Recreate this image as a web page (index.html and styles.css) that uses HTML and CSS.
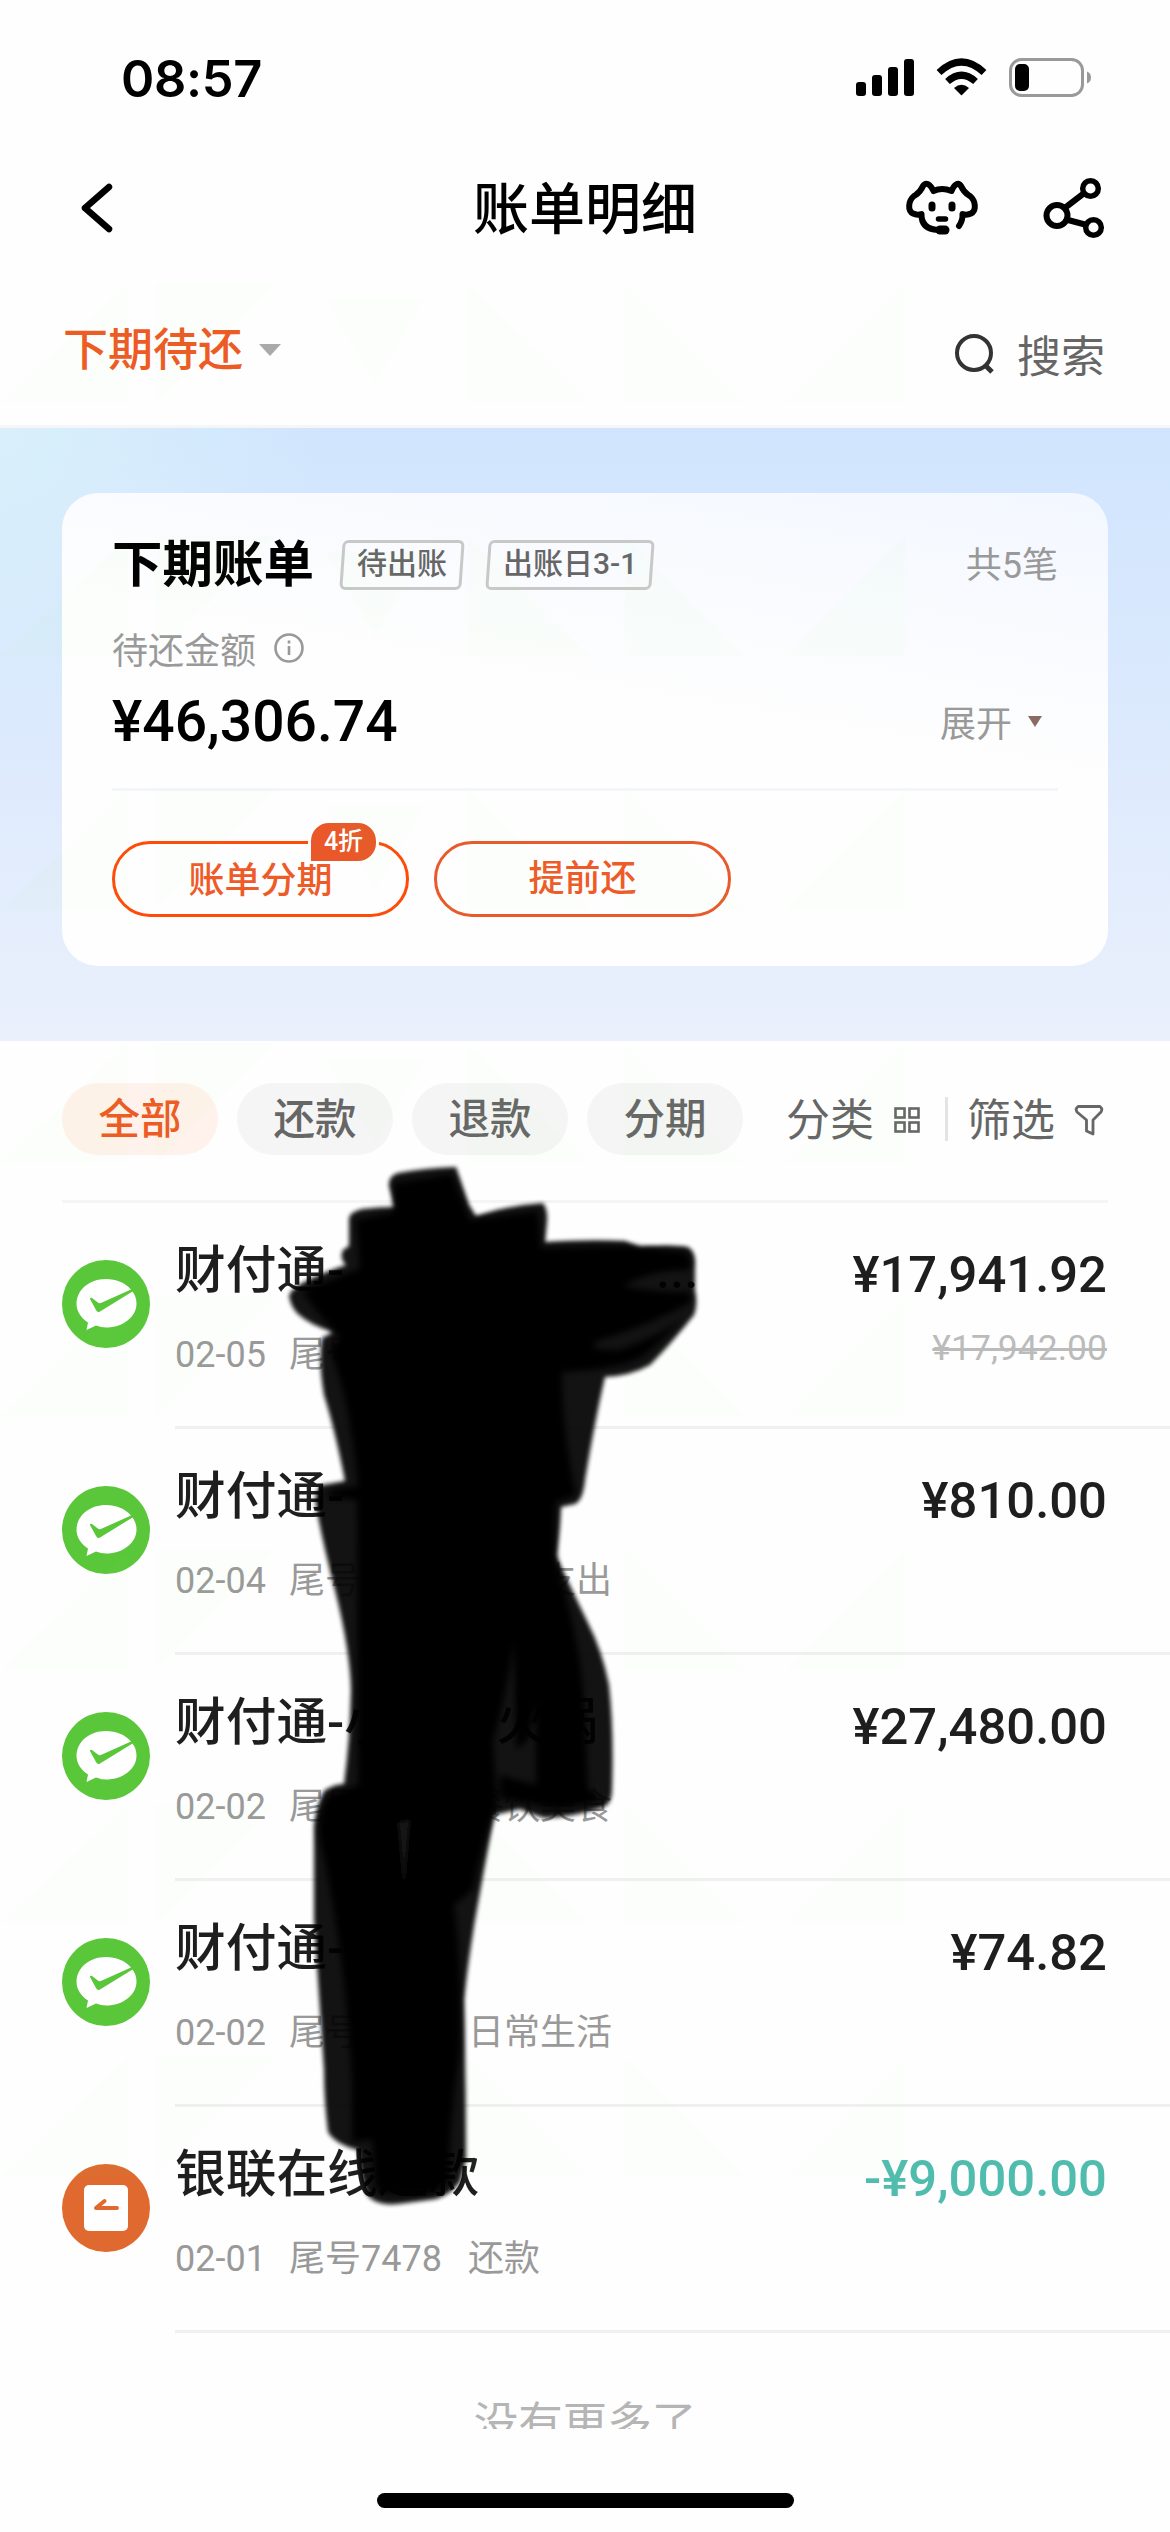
FILE: index.html
```html
<!DOCTYPE html>
<html lang="zh-CN">
<head>
<meta charset="utf-8">
<title>账单明细</title>
<link rel="stylesheet" href="styles.css">
</head>
<body>
<svg class="defs" width="0" height="0">
  <symbol id="pay" viewBox="0 0 88 88">
    <circle cx="44" cy="44" r="44" fill="#5ac63a"/>
    <path d="M44 19C27 19 14.500 30 14.500 44C14.500 51 19 58 26 62.500L24.500 70L34 65.500Q39 67.500 44 67.500C61 67.500 74.500 57 74.500 43.500C74.500 38 72.500 34.500 70.500 31.500L38 51.500Q35.500 53 34 50L28 39Q28 37 30 38L36.500 43Q38 43.500 40 42.500L69 29.500C63 22.500 54 19 44 19Z" fill="#fff"/>
  </symbol>
</svg>
<div class="page">
  <header class="status">
    <span class="time">08:57</span>
    <svg width="236" height="40" viewBox="856 58 236 40">
      <rect x="856" y="82" width="10" height="14" rx="3"/><rect x="872" y="75" width="10" height="21" rx="3"/><rect x="888" y="67" width="10" height="29" rx="3"/><rect x="904" y="59" width="10" height="37" rx="3"/>
      <path d="M961.500 95.500L954 88Q961.500 81.500 969 88Z"/>
      <path d="M947.500 81.500Q961.500 69 975.500 81.500M939 72.500Q961.500 51.500 984 72.500" fill="none" stroke="#000" stroke-width="7"/>
      <rect x="1010.500" y="59.500" width="72" height="36" rx="11" fill="none" stroke="#999" stroke-width="3"/>
      <rect x="1015" y="64" width="14" height="27" rx="5"/><path d="M1087 71.500Q1091 73 1091 77.500T1087 83.500Z" fill="#999"/>
    </svg>
  </header>
  <nav class="nav">
    <svg width="34" height="52" viewBox="80 181 34 52"><path d="M109 186L85 207L109 228" fill="none" stroke="#000" stroke-width="6.500" stroke-linecap="round" stroke-linejoin="round"/></svg>
    <h1>账单明细</h1>
    <svg width="200" height="62" viewBox="905 176 200 62" fill="none" stroke="#000" stroke-width="6" stroke-linecap="round" stroke-linejoin="round">
      <path d="M933.500 190Q942 186 951.500 190C954 184 958 180.500 961 185C964 192 967 193 970 195C976 200 976.500 210 971 212.500Q967 214.500 962.500 213C963 219 961 222 959 225M933.500 190C930 183 926 180.500 923 185C920 192 917 193 914 195C908 200 907.500 210 913 212.500Q917 214.500 921.500 213Q921 228 938 229"/>
      <path d="M932 204V207M952 204V207" stroke-width="7"/><path d="M938.500 218H945.500" stroke-width="5.500"/><path d="M940 229H945" stroke-width="9"/>
      <circle cx="1057" cy="214.500" r="10.500"/><circle cx="1090.500" cy="187.500" r="7.800" stroke-width="5.500"/><circle cx="1093.500" cy="226.500" r="7.800" stroke-width="5.500"/>
      <path d="M1066 206L1083 193M1068 219L1085 223.500"/>
    </svg>
  </nav>
  <div class="period">
    <div class="picker"><span>下期待还</span><i class="tri"></i></div>
    <div class="search"><svg width="42" height="42" viewBox="0 0 42 42" fill="none" stroke="#333" stroke-width="4"><circle cx="20" cy="20" r="17"/><path d="M32 33L38 39" stroke-width="5"/></svg>搜索</div>
  </div>
  <section class="hero">
    <div class="card">
      <div class="line head"><h2>下期账单</h2><span class="tag">待出账</span><span class="tag">出账日3-1</span><span class="count">共5笔</span></div>
      <div class="line owed">待还金额<svg width="32" height="32" viewBox="0 0 32 32" fill="none" stroke="#999" stroke-width="2.600"><circle cx="16" cy="16" r="13.500"/><path d="M16 14V23M16 8.500V11.500"/></svg></div>
      <div class="line total"><strong>¥46,306.74</strong><span class="expand">展开<i class="tri"></i></span></div>
      <div class="actions">
        <div class="btn first">账单分期<b class="badge">4折</b></div>
        <div class="btn second">提前还</div>
      </div>
    </div>
  </section>
  <div class="filters">
    <span class="pill on">全部</span><span class="pill">还款</span><span class="pill">退款</span><span class="pill">分期</span>
    <span class="opt">分类</span>
    <svg class="grid" width="28" height="28" viewBox="0 0 28 28" fill="none" stroke="#666" stroke-width="2.600"><rect x="2.500" y="2.500" width="9" height="9"/><rect x="16.500" y="2.500" width="9" height="9"/><rect x="2.500" y="16.500" width="9" height="9"/><rect x="16.500" y="16.500" width="9" height="9"/></svg>
    <i class="bar"></i>
    <span class="opt">筛选</span>
    <svg class="funnel" width="30" height="32" viewBox="0 0 30 32" fill="none" stroke="#666" stroke-width="2.800" stroke-linejoin="round"><path d="M4 2.500H26Q29 5 27 8L19 16V30L12.500 27V16L3 8Q1 5 4 2.500Z"/></svg>
  </div>
  <main class="list">
    <article class="row"><svg class="logo"><use href="#pay"/></svg><div class="body"><div class="info"><h3><span class="clip">财付通-</span>...</h3><p><span class="date">02-05</span><span class="tail">尾号</span></p></div><div class="amt">¥17,941.92<s>¥17,942.00</s></div></div></article>
    <article class="row"><svg class="logo"><use href="#pay"/></svg><div class="body"><div class="info"><h3>财付通-</h3><p><span class="date">02-04</span><span class="tail">尾号</span>　　支出</p></div><div class="amt">¥810.00</div></div></article>
    <article class="row"><svg class="logo"><use href="#pay"/></svg><div class="body"><div class="info"><h3>财付通-小　　火锅</h3><p><span class="date">02-02</span><span class="tail">尾号</span>餐饮美食</p></div><div class="amt">¥27,480.00</div></div></article>
    <article class="row"><svg class="logo"><use href="#pay"/></svg><div class="body"><div class="info"><h3>财付通-</h3><p><span class="date">02-02</span><span class="tail">尾号</span>日常生活</p></div><div class="amt">¥74.82</div></div></article>
    <article class="row"><svg class="logo" viewBox="0 0 88 88"><circle cx="44" cy="44" r="44" fill="#e0692f"/><rect x="22" y="21" width="44" height="46" rx="5" fill="#fff"/><path d="M55 44H34L42.500 37" fill="none" stroke="#e0692f" stroke-width="4" stroke-linecap="round" stroke-linejoin="round"/></svg><div class="body"><div class="info"><h3>银联在线还款</h3><p><span class="date">02-01</span><span class="tail">尾号7478</span>还款</p></div><div class="amt refund">-¥9,000.00</div></div></article>
  </main>
  <div class="end">没有更多了</div>
  <div class="home"></div>

  <svg class="texture" width="1170" height="2532">
    <pattern id="tri" width="1170" height="253.500" patternUnits="userSpaceOnUse" y="283"><path d="M0 120L128 0V120ZM155 0H275L155 120ZM325 15H425L375 100ZM468 0L590 120H468ZM625 0L745 120H625ZM905 0V120H785Z"/></pattern>
    <rect y="283" width="1170" height="1900" fill="url(#tri)"/>
  </svg>
  <svg class="scribble" width="440" height="1060" viewBox="280 1150 440 1060">
    <defs>
      <filter id="soft" x="-10%" y="-10%" width="120%" height="120%"><feGaussianBlur stdDeviation="2"/></filter>
      <filter id="softer" x="-10%" y="-10%" width="120%" height="120%"><feGaussianBlur stdDeviation="3"/></filter>
    </defs>
    <g filter="url(#soft)" opacity=".92">
      <path d="M389 1186Q388 1176 398 1173Q425 1168 456 1167L469 1205L476 1216Q510 1205 543 1203Q548 1210 547 1222L545 1242Q590 1239 625 1241L640 1247Q670 1244 688 1247Q696 1252 695 1265V1290Q698 1305 694 1315Q670 1345 650 1365Q630 1376 605 1377Q595 1420 585 1480Q583 1500 575 1504L561 1507Q560 1535 556 1556Q572 1590 588 1623Q602 1650 609 1685Q614 1730 612 1790Q612 1803 604 1807Q570 1818 545 1818Q530 1814 520 1809L494 1815Q484 1870 475 1920Q467 1970 464 2000Q466 2080 466 2160L460 2182Q450 2195 436 2199L398 2204Q380 2206 370 2198Q362 2190 358 2150Q335 2144 328 2132Q324 2100 324 2070Q318 1980 314 1920V1825Q318 1800 325 1790Q335 1784 344 1784Q350 1740 351 1690Q350 1650 335 1590Q322 1540 316 1505Q314 1490 322 1485L345 1481Q335 1430 324 1395Q318 1360 322 1338L333 1332Q310 1325 298 1314Q290 1306 289 1295Q293 1287 310 1279Q330 1270 346 1265Q339 1258 343 1250L349 1246V1218Q350 1212 362 1209Q378 1207 395 1207Z"/>
    </g>
    <g filter="url(#softer)">
      <path d="M394 1183L452 1174L470 1220L538 1211L541 1248L625 1246L685 1252Q695 1260 688 1270Q650 1270 624 1286Q650 1292 690 1292L691 1302Q650 1325 600 1340Q580 1350 620 1350Q660 1335 684 1318Q650 1352 640 1358Q615 1370 562 1372Q562 1430 576 1495L556 1502Q553 1550 558 1570Q580 1640 584 1700L588 1788L600 1800Q560 1812 538 1805L500 1798V1775L536 1785V1700L528 1740L516 1750L514 1640Q506 1700 493 1740L497 1804Q480 1850 473 1890L454 1905Q462 1960 460 2050Q450 2120 448 2180L436 2192Q400 2198 376 2190L372 2140L352 2142L352 2080Q345 1950 319 1835Q320 1800 332 1794L358 1785L357 1500L328 1497Q322 1490 358 1486Q350 1400 330 1350L340 1338L320 1315L302 1292L360 1268L356 1220L394 1212Z"/>
    </g>
    <path d="M398 1822L410 1820L404 1888Z" fill="#151515" filter="url(#soft)"/>
  </svg>
</div>
</body>
</html>
```
FILE: styles.css
```css
* { box-sizing: border-box; margin: 0; padding: 0; }
body { width: 1170px; background: #fefefe; font-family: Roboto, "Noto Sans CJK SC", sans-serif; color: #000; }
.defs { display: block; height: 0; }
.page { position: relative; width: 1170px; height: 2532px; overflow: hidden; display: flex; flex-direction: column; }
i { display: block; }
.status { height: 156px; padding: 0 78px 0 121px; display: flex; justify-content: space-between; align-items: center; }
.time { font: 600 50.500px Inter, sans-serif; letter-spacing: -.3px; }
.nav { height: 104px; padding: 0 65px 0 80px; display: grid; grid-template-columns: 185px 1fr 200px; align-items: center; }
.nav h1 { font-size: 56px; font-weight: 500; text-align: center; line-height: 80px; padding-top: 4px; }
.period { height: 168px; padding: 0 65px 0 63px; display: flex; justify-content: space-between; border-bottom: 3px solid #f5f6f7; color: #666; }
.picker { display: flex; align-items: center; gap: 16px; height: 64px; margin-top: 58px; font-size: 45px; font-weight: 500; color: #ee5a23; }
.picker span { margin-top: -7px; }
.tri { width: 0; border: 11px solid transparent; border-top: 12px solid #aaa; border-bottom: 0; }
.search { display: flex; align-items: center; gap: 21px; height: 64px; margin-top: 62px; font-size: 44px; }
.hero { height: 613px; padding: 65px 62px 0; background: radial-gradient(circle at 0 0, #d9f0fb, transparent 330px), linear-gradient(180deg, #d0e5fd, #dbe9fd 45%, #eaf0fc); }
.card { height: 473px; padding: 33px 50px 0; border-radius: 36px; background: linear-gradient(190deg, #f3f7ff, #fefefe 45%); }
.line { display: flex; align-items: center; color: #999; }
.head { height: 68px; }
.head h2 { font-size: 50.500px; font-weight: 700; color: #000; margin-right: 26px; white-space: nowrap; }
.tag { position: relative; height: 50px; margin-top: 10px; padding: 0 17px; line-height: 47px; font-size: 30px; font-weight: 500; color: #666; margin-right: 22px; z-index: 0; }
.tag::before { content: ""; position: absolute; inset: 0 1px; border: 3px solid #c8c8c8; border-radius: 6px; transform: skewX(-4deg); z-index: -1; }
.count { margin: 4px 0 0 auto; font-size: 36px; }
.owed { height: 52px; margin-top: 28px; font-size: 36px; gap: 17px; }
.total { height: 68px; margin-top: 13px; justify-content: space-between; }
.total strong { font-size: 57px; font-weight: 500; color: #000; }
.expand { display: flex; align-items: center; gap: 16px; font-size: 36px; padding-right: 16px; }
.expand .tri { border-width: 11px 7px 0; border-top-color: #8b6b61; }
.actions { margin-top: 33px; padding-top: 50px; border-top: 3px solid #f3f5fa; display: flex; gap: 25px; }
.btn { position: relative; width: 297px; height: 76px; border: 3px solid #e85a2b; border-radius: 38px; text-align: center; font-size: 36px; font-weight: 500; color: #ee5a28; line-height: 71px; }
.first { border-color: #ff4a08; line-height: 75px; }
.badge { position: absolute; left: 193px; top: -24px; width: 71px; height: 44px; border: 3px solid #fff; border-radius: 21px 21px 21px 3px; background: #ea5728; color: #fff; font-size: 25px; font-weight: 500; line-height: 37px; }
.filters { height: 162px; margin: 0 62px; padding-top: 43px; display: flex; align-items: center; padding-bottom: 47px; border-bottom: 3px solid #f5f5f5; color: #666; white-space: nowrap; }
.pill { width: 156px; height: 72px; border-radius: 36px; background: #f5f5f5; text-align: center; line-height: 73px; font-size: 41.500px; font-weight: 500; margin-right: 19px; }
.pill.on { background: #fff2ec; color: #ee5a23; }
.opt { font-size: 44px; margin-top: -3px; }
.pill + .opt { margin-left: 24px; }
.grid { margin-left: 19px; margin-top: 2px; }
.bar { width: 3px; height: 44px; background: #e4e4e4; margin: 0 19px 0 24px; }
.funnel { margin-left: 19px; margin-top: 2px; }
.row { height: 226px; padding-left: 62px; display: flex; gap: 25px; }
.logo { width: 88px; height: 88px; margin-top: 57px; flex: none; }
.body { flex: 1; display: flex; justify-content: space-between; padding-right: 63px; border-bottom: 3px solid #f0f0f0; }
.info { white-space: nowrap; }
.info h3 { height: 64px; line-height: 64px; margin-top: 36px; font-size: 50.700px; font-weight: 500; color: #1e1e1e; display: flex; }
.clip { width: 481px; }
.info p { height: 50px; line-height: 50px; margin-top: 27px; font-size: 36px; color: #999; display: flex; }
.date { width: 114px; }
.tail { width: 179px; }
.amt { margin-top: 40px; line-height: 64px; font-size: 50.800px; font-weight: 500; color: #1e1e1e; text-align: right; }
.amt s { display: block; font-size: 35.500px; font-weight: 400; color: #bbb; line-height: 50px; margin-top: 16px; text-decoration-thickness: 3px; }
.amt.refund { color: #50bcae; }
.end { height: 46px; margin-top: 50px; padding-top: 6px; overflow: hidden; text-align: center; font-size: 44.500px; line-height: 70px; color: #b5b5b5; flex: none; }
.home { width: 417px; height: 15px; margin: 64px auto 0; border-radius: 8px; background: #000; }
.texture, .scribble { position: absolute; pointer-events: none; }
.texture { left: 0; top: 0; fill: #8f6; opacity: .018; }
.scribble { left: 280px; top: 1150px; }
```
